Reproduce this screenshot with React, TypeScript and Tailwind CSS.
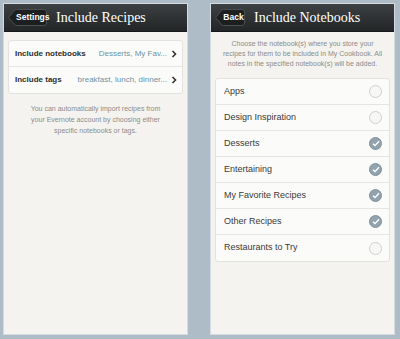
import React from "react";

const sans = { fontFamily: '"Liberation Sans", Arial, sans-serif' };

function BackButton({ label, width }: { label: string; width: number }) {
  return (
    <div className="relative h-[17px] flex items-center" style={{ width }}>
      <svg className="absolute inset-0" width={width} height={17} viewBox={`0 0 ${width} 17`}>
        <path
          d={`M0.5 8.5 L7 1 Q7.5 0.5 8.5 0.5 L${width - 3} 0.5 Q${width - 0.5} 0.5 ${width - 0.5} 3 L${width - 0.5} 14 Q${width - 0.5} 16.5 ${width - 3} 16.5 L8.5 16.5 Q7.5 16.5 7 16 Z`}
          fill="#1c1e1f"
          stroke="#4b4f52"
          strokeWidth="1"
        />
      </svg>
      <span className="relative pl-[8px] text-[8.5px] font-bold text-white w-full text-center pr-[1px]">{label}</span>
    </div>
  );
}

function Header({ back, backWidth, title }: { back: string; backWidth: number; title: string }) {
  return (
    <div className="h-[28px] flex items-center gap-[9px] px-[4px] bg-gradient-to-b from-[#3d4143] to-[#232526] border-b border-[#15171a]">
      <BackButton label={back} width={backWidth} />
      <span className="text-white text-[14px] leading-none" style={{ fontFamily: '"Liberation Serif", "Times New Roman", serif' }}>
        {title}
      </span>
    </div>
  );
}

function Chevron() {
  return (
    <svg width="6" height="8" viewBox="0 0 6 8">
      <path d="M1.5 1 L4.5 4 L1.5 7" fill="none" stroke="#333" strokeWidth="1.6" />
    </svg>
  );
}

function Check({ on }: { on: boolean }) {
  if (!on)
    return <div className="w-[13px] h-[13px] rounded-full border border-[#cfcfcc] bg-[#f7f7f5]" />;
  return (
    <div className="w-[13px] h-[13px] rounded-full bg-[#93a3ae] border border-[#81919c] flex items-center justify-center">
      <svg width="8" height="7" viewBox="0 0 8 7">
        <path d="M1 3.8 L3 5.6 L7 1.2" fill="none" stroke="#fff" strokeWidth="1.4" />
      </svg>
    </div>
  );
}

const notebooks = [
  { name: "Apps", on: false },
  { name: "Design Inspiration", on: false },
  { name: "Desserts", on: true },
  { name: "Entertaining", on: true },
  { name: "My Favorite Recipes", on: true },
  { name: "Other Recipes", on: true },
  { name: "Restaurants to Try", on: false },
];

export default function App() {
  return (
    <div className="w-[400px] h-[339px] bg-[#aebcc8] flex items-start pt-[3px] pl-[3px] gap-[22px]" style={sans}>
      <div className="w-[185px] h-[332px] bg-[#f4f3ef] border border-[#d4dbe1] flex flex-col">
        <Header back="Settings" backWidth={39} title="Include Recipes" />
        <div className="mx-[4px] mt-[8px] bg-[#fbfbf9] border border-[#e3e2de] rounded-[3px]">
          <div className="h-[26px] flex items-center pl-[6px] pr-[5px] border-b border-[#e6e5e1] whitespace-nowrap">
            <span className="text-[8px] font-bold text-[#2e2e2e]">Include notebooks</span>
            <span className="ml-auto mr-[4px] text-[8px] text-[#6a93a6]">Desserts, My Fav...</span>
            <Chevron />
          </div>
          <div className="h-[26px] flex items-center pl-[6px] pr-[5px] whitespace-nowrap">
            <span className="text-[8px] font-bold text-[#2e2e2e]">Include tags</span>
            <span className="ml-auto mr-[4px] text-[8px] text-[#6a93a6]">breakfast, lunch, dinner...</span>
            <Chevron />
          </div>
        </div>
        <p className="mt-[9px] text-center text-[7px] leading-[11px] text-[#8c8c8a]">
          You can automatically import recipes from
          <br />
          your Evernote account by choosing either
          <br />
          specific notebooks or tags.
        </p>
      </div>
      <div className="w-[185px] h-[332px] bg-[#f4f3ef] border border-[#d4dbe1] flex flex-col">
        <Header back="Back" backWidth={30} title="Include Notebooks" />
        <p className="mt-[7px] text-center text-[7px] leading-[10px] text-[#8c8c8a]">
          Choose the notebook(s) where you store your
          <br />
          recipes for them to be included in My Cookbook. All
          <br />
          notes in the specified notebook(s) will be added.
        </p>
        <div className="mx-[4px] mt-[9px] bg-[#fbfbf9] border border-[#e3e2de] rounded-[3px]">
          {notebooks.map((n, i) => (
            <div
              key={n.name}
              className={
                "h-[26px] flex items-center pl-[8px] pr-[7px]" +
                (i < notebooks.length - 1 ? " border-b border-[#e6e5e1]" : "")
              }
            >
              <span className="text-[9px] text-[#3a3a3a]">{n.name}</span>
              <div className="ml-auto">
                <Check on={n.on} />
              </div>
            </div>
          ))}
        </div>
      </div>
    </div>
  );
}
